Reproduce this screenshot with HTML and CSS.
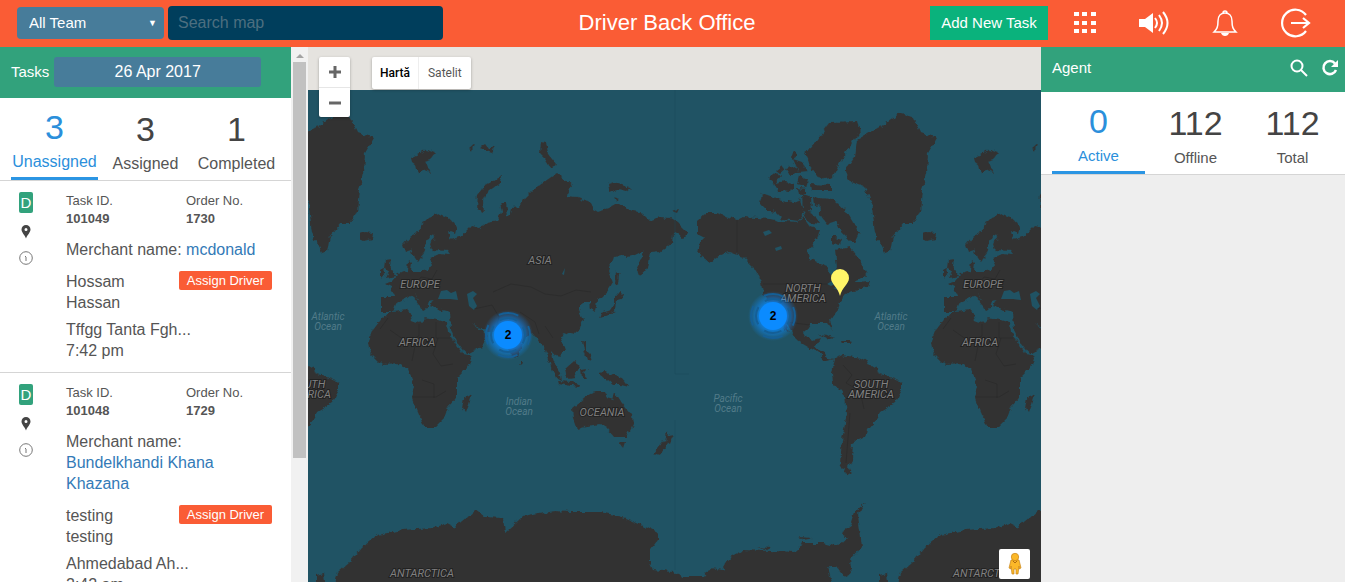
FILE: index.html
```html
<!DOCTYPE html>
<html lang="en">
<head>
  <meta charset="UTF-8">
  <meta name="viewport" content="width=device-width, initial-scale=1.0">
  <title>Driver Back Office</title>
  <link rel="stylesheet" href="styles.css">
</head>
<body>
  <header class="header">
    <div class="header-left">
      <div class="team-select">
        <select aria-label="Team">
          <option>All Team</option>
        </select>
      </div>
      <input type="text" class="search-map" placeholder="Search map" aria-label="Search map">
    </div>
    <h1>Driver Back Office</h1>
    <div class="header-right">
      <button class="add-task">Add New Task</button>
      <nav class="header-icons">
        <a href="#" aria-label="Menu">
          <svg width="30" height="30" viewBox="0 0 30 30" fill="#fff">
            <path d="M4 4h5v4H4zM12 4h5v4h-5zM21 4h5v4h-5zM4 13h5v4H4zM12 13h5v4h-5zM21 13h5v4h-5zM4 21h5v4H4zM12 21h5v4h-5zM21 21h5v4h-5z"/>
          </svg>
        </a>
        <a href="#" aria-label="Sound">
          <svg width="32" height="30" viewBox="0 0 32 30" fill="none" stroke="#fff" stroke-width="2">
            <path d="M0 11h6l8-6v20l-8-6H0z" fill="#fff" stroke="none"/>
            <path d="M16 10q4 5 0 10M20 7q6 8 0 16M24 4q9 11 0 22"/>
          </svg>
        </a>
        <a href="#" aria-label="Notifications">
          <svg width="30" height="30" viewBox="0 0 30 30" fill="none" stroke="#fff" stroke-width="1.5">
            <path d="M4 24c3-3 4-5 4-11 0-5 3-8 7-8s7 3 7 8c0 6 1 8 4 11zM13 5q0-2 2-2t2 2"/>
            <path d="M11 25h8q-1 3-4 3t-4-3z" fill="#fff" stroke="none"/>
          </svg>
        </a>
        <a href="#" aria-label="Logout">
          <svg width="32" height="32" viewBox="0 0 32 32" fill="none" stroke="#fff" stroke-width="2.2">
            <path d="M27 8A13.300 13.300 0 1 0 27 24M12 16h18M24 11l6 5-6 5"/>
          </svg>
        </a>
      </nav>
    </div>
  </header>

  <div class="container">
    <!-- Task panel -->
    <aside class="task-panel">
      <div class="task-content">
        <div class="panel-title">
          <span>Tasks</span>
          <button class="date-button">26 Apr 2017</button>
        </div>
        <div class="tabs task-tabs">
          <a href="#" class="tab active"><span class="count">3</span><span class="name">Unassigned</span></a>
          <a href="#" class="tab"><span class="count">3</span><span class="name">Assigned</span></a>
          <a href="#" class="tab"><span class="count">1</span><span class="name">Completed</span></a>
        </div>

        <div class="task">
          <div class="task-icons">
            <span class="badge">D</span>
            <svg width="10" height="14" viewBox="0 0 10 14"><path fill="#444" fill-rule="evenodd" d="M5 0a4.500 4.500 0 0 0-4.500 4.500c0 3 3 5 4.500 9 1.500-4 4.500-6 4.500-9A4.500 4.500 0 0 0 5 0zM5 3a1.500 1.500 0 1 1 0 3 1.500 1.500 0 0 1 0-3z"/></svg>
            <svg width="14" height="14" viewBox="0 0 14 14" fill="none" stroke="#777"><circle cx="7" cy="7" r="6.300"/><path d="M6 5l1 1v4"/></svg>
          </div>
          <div class="task-body">
            <div class="task-ids">
              <div>Task ID.<strong>101049</strong></div>
              <div>Order No.<strong>1730</strong></div>
            </div>
            <p class="merchant">Merchant name: <a href="#">mcdonald</a></p>
            <div class="customer">
              <span class="customer-name">Hossam Hassan</span>
              <button class="assign">Assign Driver</button>
            </div>
            <p class="address">Tffgg Tanta Fgh...<br>7:42 pm</p>
          </div>
        </div>

        <div class="task">
          <div class="task-icons">
            <span class="badge">D</span>
            <svg width="10" height="14" viewBox="0 0 10 14"><path fill="#444" fill-rule="evenodd" d="M5 0a4.500 4.500 0 0 0-4.500 4.500c0 3 3 5 4.500 9 1.500-4 4.500-6 4.500-9A4.500 4.500 0 0 0 5 0zM5 3a1.500 1.500 0 1 1 0 3 1.500 1.500 0 0 1 0-3z"/></svg>
            <svg width="14" height="14" viewBox="0 0 14 14" fill="none" stroke="#777"><circle cx="7" cy="7" r="6.300"/><path d="M6 5l1 1v4"/></svg>
          </div>
          <div class="task-body">
            <div class="task-ids">
              <div>Task ID.<strong>101048</strong></div>
              <div>Order No.<strong>1729</strong></div>
            </div>
            <p class="merchant">Merchant name: <a href="#">Bundelkhandi Khana Khazana</a></p>
            <div class="customer">
              <span class="customer-name">testing testing</span>
              <button class="assign">Assign Driver</button>
            </div>
            <p class="address">Ahmedabad Ah...<br>2:42 am</p>
          </div>
        </div>
      </div>
      <div class="scrollbar"><div class="scroll-thumb"></div></div>
    </aside>

    <!-- Map -->
    <main class="map">
      <svg class="world" viewBox="308 47 733 535" preserveAspectRatio="xMidYMid slice">
        <defs>
          <filter id="coast" filterUnits="userSpaceOnUse" x="-300" y="80" width="2000" height="520">
            <feTurbulence type="fractalNoise" baseFrequency="0.16" numOctaves="2" seed="4"/>
            <feDisplacementMap in="SourceGraphic" scale="6" xChannelSelector="R" yChannelSelector="G"/>
          </filter>
          <radialGradient id="glow">
            <stop offset="0.5" stop-color="#0b8bff" stop-opacity="0.8"/>
            <stop offset="1" stop-color="#0b8bff" stop-opacity="0"/>
          </radialGradient>
          <g id="land">
            <!-- Europe and Asia -->
            <path d="M403 245L410 237 418 232 423 222 428 217 438 213 448 217 457 227 455 234 447 231 450 240 459 237 465 232 472 225 480 227 488 222 497 220 502 212 500 203 506 203 508 216 511 214 512 208 520 207 525 198 535 188 544 182 557 173 572 185 567 197 578 198 590 203 593 209 598 212 608 208 617 203 630 210 643 213 650 220 660 217 670 218 677 222 688 233 683 238 673 233 672 243 660 252 650 253 647 267 640 277 637 267 645 250 635 255 613 257 608 270 613 283 607 293 597 300 595 312 591 309 590 303 583 303 578 307 583 320 577 333 570 332 560 338 565 350 558 357 552 350 554 365 549 362 545 350 538 340 532 333 523 343 518 357 512 356 504 343 495 332 483 330 472 323 487 335 482 347 465 353 458 344 451 330 450 312 438 309 430 306 434 300 429 301 426 310 420 302 414 293 417 299 427 308 423 310 416 301 409 296 402 301 395 304 392 312 381 312 381 297 395 297 391 287 385 284 392 281 398 274 408 271 409 260 412 263 411 271 422 271 428 270 432 262 430 258 439 254 451 255 448 251 432 250 430 244 436 235 431 234 427 242 424 254 418 262 414 257 411 249 405 251z"/>
            <!-- Africa -->
            <path d="M383 317L392 312 408 310 412 320 420 323 425 318 447 322 448 332 462 353 473 355 468 367 457 378 457 397 448 407 445 417 435 427 424 427 417 410 412 398 415 387 408 370 402 363 382 364 370 352 368 343 373 330z"/>
            <path d="M472 393L465 413 462 408 464 398zM520 359l2 4-2 2zM386 260l5-1-1 6 6 11-10 2 3-6-4-4zM380 271l5-2 1 6-6 3z"/>
            <path d="M476 208L477 195 484 186 502 176 501 182 489 191 483 200 484 212zM541 142l5 1 2 11 8 10-6 3-5-8-5-5z"/>
            <path d="M411 158l8-4 7-5 10 3-6 7-5 2 5 12-7-4-5 5-2-9-4-3zM469 149l6-5-2 7zM480 147l5-3 4 5 6-4-3 8-6-2zM608 185l6-2 8 2 8 3-4 3-8-2-8 3zM614 197l5 2-3 2zM672 211l7-2-2 4z"/>
            <!-- Eastern islands -->
            <path d="M616 271l3 3-1 12-3-2zM615 294l8-1-2 6-4 1-1 11-7 3-9 5 2-6 9-3 4-6zM582 340l3 1v9l5 4 2 8-5-2-3-9zM548 357l6 4 6 11 2 9-6-3-5-11zM558 381l14 1 8 2-1 3-20-3zM565 369l9-8 6 4-6 12-7 1zM581 370l7-1-4 4 3 6-5-1zM599 373l6-1 7 3 10 3 7 9-8-2-8 0-7-6z"/>
            <path d="M572 408L585 398 590 394 597 392 605 392 608 398 613 400 615 392 622 403 632 415 633 425 627 437 615 437 607 428 600 424 587 426 577 430 573 419zM619 442l6 0-2 6zM667 431l2 5 5-1-4 9-5-3zM664 440l4 3-9 12-5-2z"/>
            <!-- North America -->
            <path d="M697 222L707 213 717 213 737 220 743 217 757 218 770 219 783 222 798 223 803 217 810 227 820 230 817 240 808 250 810 260 827 267 832 277 837 267 835 250 850 247 857 257 868 273 853 283 870 282 868 287 853 290 842 297 837 310 830 320 833 331 827 323 810 323 804 333 807 338 813 340 820 338 815 348 825 353 827 358 835 359 825 361 817 352 797 340 786 322 789 333 783 327 770 303 763 293 760 279 753 267 743 257 730 252 720 255 710 263 698 253 700 242 705 237 697 233z"/>
            <path d="M762 193l11 4 8 3 12 2 7-3 4 15-6 8-15-2-8-8-9-2 -6-6zM768 178l9-6 4 5-6 7zM774 184l9-3 9 3-2 8-11-1zM786 169l9-3 4 6-9 3zM793 159l9 3 6 9-9 1zM799 176l9 4-2 7-9-3zM811 184l20 1v6h-19zM802 194l9 3 1 14-9 1zM804 152l7-4 4 9-6 4zM776 170l6-5 3 4-5 4zM788 182l6 2v6l-6-1zM798 188l8 1v5l-7 1zM790 155l5-3 2 4-4 3zM813 195l6 2 1 8-6 1zM806 210l7 4 6 10-8-1-7-6z"/>
            <path d="M819 198L833 199 847 212 859 233 854 244 847 237 840 230 836 221 827 224 820 214zM832 236l10 3-2 6-8-2z"/>
            <path d="M815 143L830 123 857 122 860 132 850 147 840 163 833 177 820 180 810 167 807 153zM845 170L855 157 857 140 870 132 887 123 900 113 913 117 920 132 937 138 928 153 927 173 922 190 920 213 913 223 905 223 893 237 890 252 885 253 875 233 872 207 865 187 850 182zM922 234l6-2 8 1-1 6-7 2-6-3z"/>
            <path d="M818 334l9 1 8 4-8-1zM841 340l9 0 1 3h-9z"/>
            <!-- South America -->
            <path d="M835 359L842 355 860 358 877 368 878 373 902 382 902 390 895 403 880 412 878 418 867 430 865 437 853 443 852 460 848 467 853 475 845 472 840 463 842 440 847 413 845 397 833 383 832 373z"/>
            <!-- Antarctica -->
            <path d="M330 600L338 573 350 562 362 548 377 535 402 530 432 528 447 523 455 527 475 510 485 517 503 518 505 533 522 517 555 511 570 512 600 512 623 517 637 523 658 533 658 540 650 550 650 563 653 570 673 572 683 577 703 577 710 568 723 570 730 557 743 550 797 552 802 543 823 543 837 547 847 538 853 520 855 511 865 502 858 514 860 530 862 547 850 560 852 573 844 577 837 567 828 567 832 582 832 600zM879 590v-15l8-2 2 17zM757 547l14 1-4 2zM798 537l15 1-9 2zM844 530l8-6-4 14-6-3z"/>
          </g>
          <g id="water">
            <path d="M438 299l3-8 6-1 4 3 5-2 2 9-8-1zM467 294l6-3 4 3-4 4 4 8-3 4-5-4zM562 274l3-6-1 7zM763 232l6-2 3 3-7 3zM775 248l6-2 1 3-6 2z"/>
            <path d="M827 284l5-3 3 3-4 2zM833 288l4-1 3 4z"/>
          </g>
          <g id="borders">
            <path d="M737 220v32M763 284h65M786 322l24 3M388 318l-8 11M390 330l17 12 12-6v-12M436 322v16h14M438 338l-5 16 8 12 12-2M416 341l-4 20M412 397h24l10-6M422 380l12 4v14M843 365l9 10-6 8 14 8 4 18M850 413l-4 50M493 292l18-8 20 3 14 7 16 2 15-6 15 2M474 309l18-4 7 12-3 12M520 312l15 10 4 12M545 326l8 12M415 285l6-8 11 2 5-9"/>
          </g>
          <g id="labels">
            <text x="420" y="288">EUROPE</text>
            <text x="417" y="346">AFRICA</text>
            <text x="540" y="264">ASIA</text>
            <text x="602" y="416">OCEANIA</text>
            <text x="803" y="292">NORTH</text>
            <text x="803" y="302">AMERICA</text>
            <text x="871" y="388">SOUTH</text>
            <text x="871" y="398">AMERICA</text>
            <text x="422" y="577">ANTARCTICA</text>
            <g class="ocean">
              <text x="519" y="405">Indian</text>
              <text x="519" y="415">Ocean</text>
              <text x="728" y="402">Pacific</text>
              <text x="728" y="412">Ocean</text>
              <text x="891" y="320">Atlantic</text>
              <text x="891" y="330">Ocean</text>
            </g>
          </g>
          <g id="tile">
            <use href="#land" class="land" filter="url(#coast)"/>
            <use href="#water" class="water"/>
            <use href="#borders" class="borders"/>
            <use href="#labels" class="labels"/>
          </g>
          <g id="cluster">
            <circle r="25" fill="url(#glow)"/>
            <circle r="22" class="ring" stroke-dasharray="20 14.560" stroke-dashoffset="10"/>
            <circle r="17" class="ring" stroke-dasharray="18 8.700" stroke-dashoffset="9"/>
            <circle r="14" fill="#0b8bff"/>
            <text y="4">2</text>
          </g>
        </defs>
        <rect class="water" x="-300" y="90" width="2000" height="600"/>
        <use href="#tile" x="-563"/>
        <use href="#tile"/>
        <use href="#tile" x="563"/>
        <path class="date-line" d="M675 90v284h14M675 420v150"/>
        <use href="#cluster" class="cluster" x="508" y="335"/>
        <use href="#cluster" class="cluster" x="773" y="316"/>
        <path fill="#fff568" d="M840 269a9 9 0 0 0-9 9c0 6 7 9 9 18 2-9 9-12 9-18a9 9 0 0 0-9-9z"/>
      </svg>

      <div class="zoom-control">
        <button aria-label="Zoom in"><svg width="12" height="12" viewBox="0 0 12 12"><path d="M0 6h12M6 0v12" stroke="#666" stroke-width="3"/></svg></button>
        <button aria-label="Zoom out"><svg width="12" height="12" viewBox="0 0 12 12"><path d="M0 6h12" stroke="#666" stroke-width="3"/></svg></button>
      </div>
      <div class="map-type">
        <button class="selected">Hartă</button>
        <button>Satelit</button>
      </div>
      <button class="street-view" aria-label="Street View">
        <svg width="14" height="24" viewBox="0 0 14 24">
          <path fill="#fbb829" stroke="#c98418" stroke-width="0.700" d="M3 8h8l2 8-2 1v-3l-1 8H8V17H6v5H4L3 14v3l-2-1z"/>
          <circle cx="7" cy="5" r="3.700" fill="#fbb829" stroke="#c98418" stroke-width="0.700"/>
          <path d="M5 9l2 2 2-2" fill="none" stroke="#b06b10"/>
        </svg>
      </button>
    </main>

    <!-- Agent panel -->
    <aside class="agent-panel">
      <div class="panel-title">
        <span>Agent</span>
        <div class="agent-actions">
          <a href="#" aria-label="Search agent">
            <svg width="18" height="18" viewBox="0 0 18 18" fill="none" stroke="#fff" stroke-width="2"><circle cx="7" cy="7" r="5.500"/><path d="M11 11l6 6"/></svg>
          </a>
          <a href="#" aria-label="Refresh">
            <svg width="18" height="18" viewBox="0 0 18 18"><path d="M14 4.500A6.500 6.500 0 1 0 15 11" fill="none" stroke="#fff" stroke-width="2.500"/><path d="M17 1v7h-7z" fill="#fff"/></svg>
          </a>
        </div>
      </div>
      <div class="tabs agent-tabs">
        <a href="#" class="tab active"><span class="count">0</span><span class="name">Active</span></a>
        <a href="#" class="tab"><span class="count">112</span><span class="name">Offline</span></a>
        <a href="#" class="tab"><span class="count">112</span><span class="name">Total</span></a>
      </div>
    </aside>
  </div>
</body>
</html>
```
FILE: styles.css
```css
* {
  box-sizing: border-box;
}
body {
  font-family: "Liberation Sans", Arial, sans-serif;
  margin: 0;
  display: flex;
  flex-direction: column;
  height: 100vh;
  overflow: hidden;
  font-size: 15px;
  color: #555;
  background-color: #eee;
}
button, input, select {
  font-family: inherit;
  font-size: 15px;
  border: none;
}
button {
  cursor: pointer;
  padding: 0;
}
a {
  color: #337ab7;
  text-decoration: none;
}
p {
  margin: 0;
}
svg {
  display: block;
}

/* Header */
.header {
  height: 47px;
  flex: none;
  background-color: #fa5c35;
  color: #fff;
  display: flex;
  justify-content: space-between;
  align-items: center;
  padding: 0 34px 2px 17px;
}
.header h1 {
  margin: 0;
  padding-left: 6px;
  font-size: 22px;
  font-weight: normal;
}
.header-left {
  flex: 1;
  display: flex;
  align-items: center;
  gap: 4px;
}
.team-select {
  position: relative;
  width: 147px;
}
.team-select select {
  appearance: none;
  width: 100%;
  height: 32px;
  padding: 0 12px;
  border-radius: 4px;
  background-color: #477c9a;
  color: #fff;
}
.team-select::after {
  content: "▼";
  position: absolute;
  right: 7px;
  top: 11px;
  font-size: 9px;
  pointer-events: none;
}
.search-map {
  width: 275px;
  height: 34px;
  padding: 0 10px;
  border-radius: 4px;
  background-color: #003e5c;
  color: #fff;
  font-size: 16px;
}
.search-map::placeholder {
  color: #4d6f80;
}
.header-right {
  flex: 1;
  display: flex;
  align-items: center;
  justify-content: flex-end;
  gap: 22px;
}
.add-task {
  width: 118px;
  height: 34px;
  background-color: #0ab27c;
  color: #fff;
}
.header-icons {
  display: flex;
  align-items: center;
  gap: 39px;
}

/* Page columns */
.container {
  display: flex;
  flex: 1;
  min-height: 0;
}
.panel-title {
  display: flex;
  background-color: #32a27c;
  color: #fff;
}

/* Count tabs */
.tabs {
  display: flex;
  gap: 4px;
  background-color: #fff;
  border-bottom: 1px solid #d5d5d5;
  text-align: center;
}
.tab {
  flex: 1;
  min-width: 0;
  color: #555;
  padding-top: 2px;
}
.tab .count, .tab .name {
  display: block;
}
.tab .count {
  font-size: 34px;
  line-height: 40px;
  color: #444;
}
.tab .name {
  line-height: 20px;
  margin-top: 5px;
}
.tab.active {
  padding-top: 0;
  border-bottom: 3px solid #2b95e3;
}
.tab.active .count, .tab.active .name {
  color: #2b8fdb;
}

/* Task panel */
.task-panel {
  width: 308px;
  flex: none;
  display: flex;
  background-color: #fff;
}
.task-content {
  flex: 1;
  overflow: hidden;
}
.task-panel .panel-title {
  height: 51px;
  align-items: flex-start;
  padding: 10px 30px 0 11px;
  gap: 5px;
  line-height: 30px;
}
.date-button {
  flex: 1;
  height: 30px;
  border-radius: 3px;
  background-color: #477c9a;
  color: #fff;
  font-size: 16px;
}
.task-tabs {
  height: 83px;
  padding: 9px 11px 0 11px;
}
.task-tabs .tab {
  font-size: 16px;
}
.task {
  display: flex;
  padding: 11px 19px 11px 19px;
  border-bottom: 1px solid #d5d5d5;
}
.task-icons {
  width: 47px;
  display: flex;
  flex-direction: column;
  align-items: flex-start;
  gap: 12px;
}
.task-icons svg:nth-child(2) {
  margin-left: 2px;
}
.badge {
  width: 14px;
  height: 21px;
  line-height: 21px;
  border-radius: 2px;
  background-color: #32a27c;
  color: #fff;
  text-align: center;
}
.task-body {
  flex: 1;
  font-size: 16px;
  line-height: 21px;
}
.task-ids {
  display: grid;
  grid-template-columns: 120px 1fr;
  font-size: 13px;
  line-height: 18px;
}
.task-ids strong {
  display: block;
}
.merchant {
  margin-top: 11px;
}
.customer {
  display: flex;
  justify-content: space-between;
  align-items: flex-start;
  margin-top: 11px;
}
.customer-name {
  width: 80px;
}
.assign {
  width: 93px;
  height: 19px;
  border-radius: 2px;
  background-color: #fa5c35;
  color: #fff;
  font-size: 13px;
}
.address {
  margin-top: 6px;
}
.scrollbar {
  width: 17px;
  background-color: #f1f1f1;
  padding: 7px 2px 0;
}
.scrollbar::before {
  content: "";
  display: block;
  width: 0;
  margin: 0 auto 4px;
  border: 4px solid transparent;
  border-top: none;
  border-bottom-color: #a3a3a3;
}
.scroll-thumb {
  height: 75%;
  background-color: #c1c1c1;
}

/* Map */
.map {
  flex: 1;
  min-width: 0;
  position: relative;
  background-color: #e5e3df;
}
.world {
  width: 100%;
  height: 100%;
}
.land {
  fill: #333;
}
.water {
  fill: #205364;
}
.borders, .date-line {
  fill: none;
  stroke: #1c4555;
  stroke-opacity: 0.4;
}
.borders {
  stroke: #222;
}
.labels, .cluster {
  font-family: Roboto, sans-serif;
  font-size: 11px;
  text-anchor: middle;
}
.labels {
  font-style: italic;
  fill: #808080;
  stroke: #222;
  stroke-width: 2px;
  paint-order: stroke;
}
.ocean {
  font-size: 10px;
  fill: #527b89;
  stroke: none;
}
.cluster {
  font-family: "Liberation Sans", Arial, sans-serif;
  font-size: 12px;
  font-weight: bold;
}
.ring {
  fill: none;
  stroke: #155f96;
  stroke-width: 2px;
}
.zoom-control, .map-type {
  position: absolute;
  top: 10px;
  display: flex;
  background-color: #fff;
  border-radius: 2px;
  box-shadow: 0 1px 3px rgba(0, 0, 0, 0.3);
}
.zoom-control {
  left: 11px;
  flex-direction: column;
}
.zoom-control button {
  width: 31px;
  height: 30px;
  display: grid;
  place-items: center;
  background: none;
}
.zoom-control button + button {
  border-top: 1px solid #e6e6e6;
}
.map-type {
  left: 64px;
}
.map-type button {
  height: 32px;
  padding: 0 8px;
  background: none;
  color: #565656;
  font-family: Roboto, sans-serif;
  font-size: 12px;
}
.map-type button + button {
  padding: 0 9px;
  border-left: 1px solid #eee;
}
.map-type .selected {
  color: #000;
  font-weight: 500;
}
.street-view {
  position: absolute;
  right: 11px;
  bottom: 3px;
  width: 31px;
  height: 30px;
  display: grid;
  place-items: center;
  background-color: #fff;
  border-radius: 2px;
}

/* Agent panel */
.agent-panel {
  width: 304px;
  flex: none;
}
.agent-panel .panel-title {
  height: 45px;
  padding: 0 6px 4px 11px;
  align-items: center;
  justify-content: space-between;
}
.agent-actions {
  display: flex;
  gap: 13px;
}
.agent-tabs {
  height: 83px;
  padding: 9px 6px 0 11px;
}
```
